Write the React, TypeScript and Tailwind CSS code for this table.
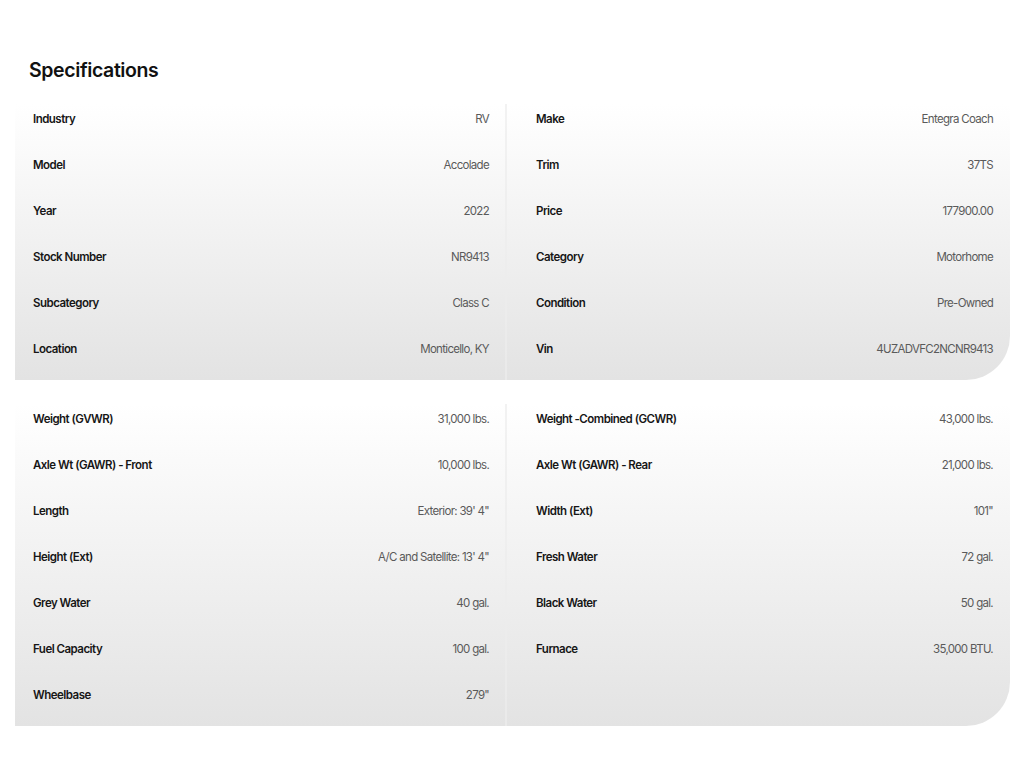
const general: [string, string][][] = [
  [["Industry", "RV"], ["Make", "Entegra Coach"]],
  [["Model", "Accolade"], ["Trim", "37TS"]],
  [["Year", "2022"], ["Price", "177900.00"]],
  [["Stock Number", "NR9413"], ["Category", "Motorhome"]],
  [["Subcategory", "Class C"], ["Condition", "Pre-Owned"]],
  [["Location", "Monticello, KY"], ["Vin", "4UZADVFC2NCNR9413"]],
];

const dimensions: [string, string][][] = [
  [["Weight (GVWR)", "31,000 lbs."], ["Weight -Combined (GCWR)", "43,000 lbs."]],
  [["Axle Wt (GAWR) - Front", "10,000 lbs."], ["Axle Wt (GAWR) - Rear", "21,000 lbs."]],
  [["Length", "Exterior: 39' 4\""], ["Width (Ext)", "101\""]],
  [["Height (Ext)", "A/C and Satellite: 13' 4\""], ["Fresh Water", "72 gal."]],
  [["Grey Water", "40 gal."], ["Black Water", "50 gal."]],
  [["Fuel Capacity", "100 gal."], ["Furnace", "35,000 BTU."]],
  [["Wheelbase", "279\""], ["", ""]],
];

function Cell({ label, value, right }: { label: string; value: string; right?: boolean }) {
  return (
    <div
      className={
        "flex h-[46px] items-start justify-between pt-[7px] " +
        (right ? "pl-[29px] pr-[17px]" : "pl-[18px] pr-[16px]")
      }
    >
      <span className="text-[11.5px] leading-[16px] font-semibold tracking-[-0.045em] text-[#161616]">{label}</span>
      <span className="text-[11.5px] leading-[16px] tracking-[-0.06em] text-[#5a5a5a]">{value}</span>
    </div>
  );
}

function Panel({ rows }: { rows: [string, string][][] }) {
  return (
    <div className="flex rounded-br-[44px] bg-gradient-to-b from-white to-[#e3e3e3]">
      <div className="w-[492px] border-r-2 border-[#ececec]/70">
        {rows.map((r, i) => (
          <Cell key={i} label={r[0][0]} value={r[0][1]} />
        ))}
      </div>
      <div className="flex-1">
        {rows.map((r, i) => (
          <Cell key={i} label={r[1][0]} value={r[1][1]} right />
        ))}
      </div>
    </div>
  );
}

export default function App() {
  return (
    <div className="min-h-[768px] w-[1024px] bg-white font-['Inter',sans-serif]">
      <div className="pl-[15px] pr-[14px] pt-[56px]">
        <h2 className="pl-[14px] text-[19.5px] leading-[28px] font-semibold tracking-[-0.02em] text-[#111]">
          Specifications
        </h2>
        <div className="mt-[20px]">
          <Panel rows={general} />
        </div>
        <div className="mt-[24px]">
          <Panel rows={dimensions} />
        </div>
      </div>
    </div>
  );
}
